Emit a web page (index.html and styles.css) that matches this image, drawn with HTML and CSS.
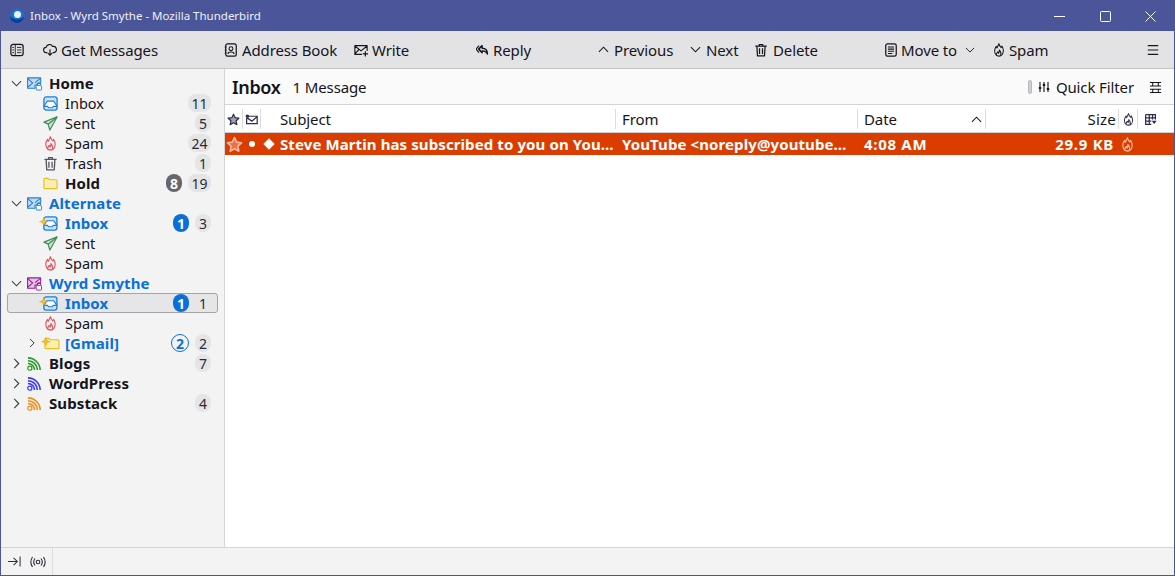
FILE: index.html
```html
<!DOCTYPE html>
<html lang="en">
<head>
<meta charset="utf-8">
<title>Inbox - Wyrd Smythe - Mozilla Thunderbird</title>
<link rel="stylesheet" href="styles.css">
</head>
<body>
<svg class="defs" width="0" height="0" aria-hidden="true">
  <symbol id="flame" viewBox="0 0 16 16"><g transform="translate(1.600 0) scale(.8 1)" fill="none" stroke="currentColor" stroke-width="1.500" stroke-linejoin="round"><path d="M8 .9c.4 2 1.800 3 3 4.300.6-.4 1-1 1.200-1.600 1.300 1.700 2 3.500 2 5.300C14.200 12.500 11.500 15 8 15s-6.200-2.500-6.200-6.200c0-2 1-3.700 2.200-5 .2.800.6 1.400 1.100 1.800C6 3.800 7.200 2.400 8 .9z"/><path d="M4.300 14.300c-.6-1.800.4-3 1.900-4 .6.500 1 .9 1.300 1.500.5-1.300 1-2.500 1-3.700 1.500 1.500 3.300 3.800 2 6.200"/></g></symbol>
  <symbol id="sent" viewBox="0 0 16 16"><path fill="currentColor" fill-opacity=".18" stroke="currentColor" stroke-width="1.300" stroke-linejoin="round" d="M15 1 1 6.500l4.500 2.200 1.800 6.300L15 1z"/><path fill="none" stroke="currentColor" stroke-width="1.300" d="M5.500 8.700 15 1"/></symbol>
  <symbol id="inbox" viewBox="0 0 16 16"><rect x="1" y="1" width="14" height="14" rx="2.500" fill="#cfe3fb" stroke="currentColor" stroke-width="1.400"/><path fill="#fff" stroke="currentColor" stroke-width="1.200" stroke-linejoin="round" d="M1 11 4.500 5.500h7L15 11h-4l-1 1.500H6L5 11z"/></symbol>
  <symbol id="inboxnew" viewBox="0 0 20 16"><rect x="5" y="1" width="14" height="14" rx="2.500" fill="#cfe3fb" stroke="currentColor" stroke-width="1.400"/><path fill="#fff" stroke="currentColor" stroke-width="1.200" stroke-linejoin="round" d="M5 10 8.500 5h7L19 10h-4l-1 1.500h-4L9 10z"/><path fill="#f2c230" stroke="#e0a010" stroke-width=".6" d="M5 1.500 6.300 5 9.500 6 6.300 7 5 10.500 3.700 7 .5 6l3.200-1z"/></symbol>
  <symbol id="trash" viewBox="0 0 16 16"><path fill="none" stroke="currentColor" stroke-width="1.400" stroke-linejoin="round" d="M1.500 3.500h13M6 3.500V1.700h4v1.800M3.300 3.500l.7 11.200h8l.7-11.200M6.300 6v6.500M9.700 6v6.500"/></symbol>
  <symbol id="folder" viewBox="0 0 16 16"><path fill="#fbeeb0" stroke="#e6c020" stroke-width="1.200" stroke-linejoin="round" d="M1 3.500a1 1 0 0 1 1-1h3.500l1.500 1.500h7a1 1 0 0 1 1 1v7.500a1 1 0 0 1-1 1H2a1 1 0 0 1-1-1z"/></symbol>
  <symbol id="foldernew" viewBox="0 0 20 16"><path fill="#fbeeb0" stroke="#e6c020" stroke-width="1.200" stroke-linejoin="round" d="M4 3.500a1 1 0 0 1 1-1h3.500L10 4h8a1 1 0 0 1 1 1v7.500a1 1 0 0 1-1 1H5a1 1 0 0 1-1-1z"/><path fill="#f2c230" stroke="#e0a010" stroke-width=".6" d="M5 1.500 6.300 5 9.500 6 6.300 7 5 10.500 3.700 7 .5 6l3.200-1z"/></symbol>
  <symbol id="acct" viewBox="0 0 16 16"><path fill="currentColor" fill-opacity=".2" stroke="currentColor" stroke-width="1.100" stroke-linejoin="round" d="M.6 2h14v6H11v1.500H8.500V13H.6z"/><path fill="none" stroke="currentColor" stroke-width="1.100" d="M.6 2.500 6 7.500.6 12M14.500 2.500 8.500 7"/><rect x="9.800" y="10" width="5.700" height="5" rx="1" fill="#fff" stroke="currentColor"/><path fill="none" stroke="currentColor" d="M11 10V8.800a1.700 1.700 0 0 1 3.400 0V10"/></symbol>
  <symbol id="rss" viewBox="0 0 16 16"><circle cx="3" cy="13" r="2.200" fill="none" stroke="currentColor" stroke-width="1.300"/><path fill="none" stroke="currentColor" stroke-width="1.700" d="M1 8a7 7 0 0 1 7 7M1 5a10 10 0 0 1 10 10M1 2a13 13 0 0 1 13 13"/></symbol>
  <symbol id="chev-d" viewBox="0 0 12 12"><path fill="none" stroke="currentColor" stroke-width="1.100" d="M1 3.500 6 8.500l5-5"/></symbol>
  <symbol id="chev-u" viewBox="0 0 12 12"><path fill="none" stroke="currentColor" stroke-width="1.100" d="M1 8.500 6 3.500l5 5"/></symbol>
  <symbol id="chev-r" viewBox="0 0 12 12"><path fill="none" stroke="currentColor" stroke-width="1.200" d="M3.500 1 8.500 6l-5 5"/></symbol>
  <symbol id="filter" viewBox="0 0 12 12"><path fill="none" stroke="currentColor" stroke-width="1.100" d="M2 1v10M6 1v10M10 1v10"/><path fill="currentColor" d="M.8 6h2.400v2H.8zM4.800 3h2.400v2H4.800zM8.800 7h2.400v2H8.800z"/></symbol>
  <symbol id="star" viewBox="0 0 16 16"><path fill="currentColor" fill-opacity=".45" stroke="currentColor" stroke-width="1.500" stroke-linejoin="round" d="m8 1.500 2 4.300 4.600.6-3.400 3.200.9 4.700L8 12l-4.100 2.300.9-4.700L1.400 6.400 6 5.800z"/></symbol>
</svg>
<div class="window">
  <header class="titlebar">
    <svg class="applogo" viewBox="0 0 16 16" width="16" height="16"><circle cx="8" cy="8" r="7" fill="#1673d6"/><path fill="#0a3f94" d="M1 8a7 7 0 0 0 14 0c-2 4-10 5-14 0z"/><circle cx="8.500" cy="6.500" r="3.500" fill="#e8f3fc"/></svg>
    <span class="wintitle">Inbox - Wyrd Smythe - Mozilla Thunderbird</span>
    <div class="winctl">
      <svg viewBox="0 0 11 11"><path stroke="#fff" d="M0 5.500h11"/></svg>
      <svg viewBox="0 0 11 11"><rect x=".5" y=".5" width="10" height="10" rx="1" fill="none" stroke="#fff"/></svg>
      <svg viewBox="0 0 11 11"><path stroke="#fff" d="m.5.500 10 10M10.500.500l-10 10"/></svg>
    </div>
  </header>

  <nav class="toolbar">
    <span class="tb"><svg class="ti" viewBox="0 0 16 16"><rect x="1" y="1.500" width="14" height="13" rx="2.500" fill="none" stroke="currentColor" stroke-width="1.400"/><path fill="none" stroke="currentColor" d="M6 1.500v13M8 5h5M8 8h5M8 11h5M2.500 5h2M2.500 8h2M2.500 11h2"/></svg></span>
    <span class="tb"><svg class="ti" viewBox="0 0 16 16"><path fill="none" stroke="currentColor" stroke-width="1.300" stroke-linejoin="round" d="M5 11H4a3 3 0 0 1-.5-6A4 4 0 0 1 11 4a3.500 3.500 0 0 1 1.500 7H11"/><path fill="none" stroke="currentColor" stroke-width="1.300" d="M8 7v7M5.500 11.500 8 14l2.500-2.500"/></svg>Get Messages</span>
    <span class="tb"><svg class="ti" viewBox="0 0 16 16"><rect x="2" y="1" width="12" height="14" rx="2" fill="none" stroke="currentColor" stroke-width="1.400"/><circle cx="8" cy="6.500" r="2.200" fill="none" stroke="currentColor" stroke-width="1.200"/><path fill="none" stroke="currentColor" stroke-width="1.200" d="M4.500 12.500c.3-3 6.700-3 7 0M.8 4.500h2M.8 8h2M.8 11.500h2"/></svg>Address Book</span>
    <span class="tb"><svg class="ti" viewBox="0 0 16 16"><path fill="none" stroke="currentColor" stroke-width="1.300" stroke-linejoin="round" d="M9 13H1V3h14v6M1 3.500 8 9l7-5.500M1 12.500l4.500-5"/><path fill="none" stroke="currentColor" stroke-width="1.300" d="M13 9.500v6M10 12.500h6"/></svg>Write</span>
    <span class="tb"><svg class="ti reply" viewBox="0 0 16 16"><path fill="none" stroke="currentColor" stroke-width="1.700" stroke-linejoin="round" d="M7 3 3 7l4 4V9c3 0 5 1 6 3.500.3-4-2-6.500-6-6.500z"/><path fill="none" stroke="currentColor" stroke-width="1.300" d="M3.500 3 0 7l3.500 4"/></svg>Reply</span>
    <span class="tb"><svg class="ti nav"><use href="#chev-u"/></svg>Previous</span>
    <span class="tb"><svg class="ti nav"><use href="#chev-d"/></svg>Next</span>
    <span class="tb"><svg class="ti del"><use href="#trash"/></svg>Delete</span>
    <span class="tb"><svg class="ti mv" viewBox="0 0 16 16"><rect x="2" y="1" width="12" height="14" rx="2" fill="none" stroke="currentColor" stroke-width="1.400"/><path fill="none" stroke="currentColor" stroke-width="1.200" d="M4.500 4.500h7M4.500 7h7M4.500 9.500h7M4.500 12h5"/></svg>Move to<svg class="tchev"><use href="#chev-d"/></svg></span>
    <span class="tb"><svg class="ti sp"><use href="#flame"/></svg>Spam</span>
    <span class="tb"><svg class="ti" viewBox="0 0 16 16"><path stroke="currentColor" stroke-width="1.200" d="M2 3h12M2 8h12M2 13h12"/></svg></span>
  </nav>

  <div class="main">
    <aside class="sidebar">
      <div class="row l0 strong"><svg class="tw"><use href="#chev-d"/></svg><svg class="ic c-blue"><use href="#acct"/></svg><span class="nm">Home</span></div>
      <div class="row l1"><svg class="ic c-blue"><use href="#inbox"/></svg><span class="nm">Inbox</span><span class="pill">11</span></div>
      <div class="row l1"><svg class="ic c-green"><use href="#sent"/></svg><span class="nm">Sent</span><span class="pill">5</span></div>
      <div class="row l1"><svg class="ic c-red"><use href="#flame"/></svg><span class="nm">Spam</span><span class="pill">24</span></div>
      <div class="row l1"><svg class="ic c-grey"><use href="#trash"/></svg><span class="nm">Trash</span><span class="pill">1</span></div>
      <div class="row l1 strong"><svg class="ic"><use href="#folder"/></svg><span class="nm">Hold</span><span class="badge grey">8</span><span class="pill">19</span></div>
      <div class="row l0 strong new"><svg class="tw"><use href="#chev-d"/></svg><svg class="ic c-blue"><use href="#acct"/></svg><span class="nm">Alternate</span></div>
      <div class="row l1n strong new"><svg class="icn c-blue"><use href="#inboxnew"/></svg><span class="nm">Inbox</span><span class="badge">1</span><span class="pill">3</span></div>
      <div class="row l1"><svg class="ic c-green"><use href="#sent"/></svg><span class="nm">Sent</span></div>
      <div class="row l1"><svg class="ic c-red"><use href="#flame"/></svg><span class="nm">Spam</span></div>
      <div class="row l0 strong new"><svg class="tw"><use href="#chev-d"/></svg><svg class="ic c-purple"><use href="#acct"/></svg><span class="nm">Wyrd Smythe</span></div>
      <div class="row l1n strong new sel"><svg class="icn c-blue"><use href="#inboxnew"/></svg><span class="nm">Inbox</span><span class="badge">1</span><span class="pill plain">1</span></div>
      <div class="row l1"><svg class="ic c-red"><use href="#flame"/></svg><span class="nm">Spam</span></div>
      <div class="row l1t strong new"><svg class="tw"><use href="#chev-r"/></svg><svg class="icn"><use href="#foldernew"/></svg><span class="nm">[Gmail]</span><span class="badge ring">2</span><span class="pill">2</span></div>
      <div class="row l0 strong"><svg class="tw"><use href="#chev-r"/></svg><svg class="ic c-rgreen"><use href="#rss"/></svg><span class="nm">Blogs</span><span class="pill">7</span></div>
      <div class="row l0 strong"><svg class="tw"><use href="#chev-r"/></svg><svg class="ic c-rblue"><use href="#rss"/></svg><span class="nm">WordPress</span></div>
      <div class="row l0 strong"><svg class="tw"><use href="#chev-r"/></svg><svg class="ic c-orange"><use href="#rss"/></svg><span class="nm">Substack</span><span class="pill">4</span></div>
    </aside>

    <section class="content">
      <div class="listhead">
        <h1 class="h-title">Inbox</h1>
        <span class="h-count">1 Message</span>
        <span class="qf-toggle"></span>
        <svg class="qf-ic"><use href="#filter"/></svg>
        <span class="qf-text">Quick Filter</span>
        <svg class="qf-opt" viewBox="0 0 14 14"><path fill="none" stroke="currentColor" d="M1 1.500h12M1 5.500h12M1 9h12M1 12.500h12M4 1.500v4M10 1.500v4M4 9v3.500M10 9v3.500" stroke-width="1.100"/></svg>
      </div>
      <div class="cols colhead">
        <span class="c"><svg class="hi"><use href="#star"/></svg></span>
        <span class="c"><svg class="hi" viewBox="0 0 16 16"><path fill="none" stroke="currentColor" stroke-width="1.500" d="M3 4h12v9H2V6M2.500 6 8.500 10 15 4.500"/><circle cx="3" cy="4" r="2.200" fill="currentColor"/></svg></span>
        <span class="c txt">Subject</span>
        <span class="c txt">From</span>
        <span class="c txt">Date<svg class="sort"><use href="#chev-u"/></svg></span>
        <span class="c txt right">Size</span>
        <span class="c"><svg class="hi"><use href="#flame"/></svg></span>
        <span class="c last"><svg class="hi" viewBox="0 0 16 16"><path fill="none" stroke="currentColor" stroke-width="1.500" d="M2 2h12v6M2 2v12h7M2 6h12M6.500 2v12M10.500 2v6M2 10h7"/><path fill="currentColor" d="m9.500 9.500h6l-3 4z"/></svg></span>
      </div>
      <div class="cols msg">
        <span class="m"><svg class="mstar"><use href="#star"/></svg></span>
        <span class="m"><i class="dot"></i></span>
        <span class="m subj"><i class="diamond"></i><span class="ell">Steve Martin has subscribed to you on YouTube!</span></span>
        <span class="m tx"><span class="ell">YouTube &lt;noreply@youtube.com&gt;</span></span>
        <span class="m tx wide">4:08 AM</span>
        <span class="m tx right wide">29.9 KB</span>
        <span class="m"><svg class="mflame"><use href="#flame"/></svg></span>
        <span class="m"></span>
      </div>
    </section>
  </div>

  <footer class="status">
    <span class="st"><svg class="st1" viewBox="0 0 14 14"><path fill="none" stroke="currentColor" stroke-width="1.100" d="M0 7h10M6 3l4 4-4 4M13 1.500v11"/></svg><svg class="st2" viewBox="0 0 16 14"><circle cx="8" cy="7" r="1.800" fill="none" stroke="currentColor" stroke-width="1.100"/><path fill="none" stroke="currentColor" stroke-width="1.100" d="M5 3.500C3.500 5.500 3.500 8.500 5 10.500M11 3.500c1.500 2 1.500 5 0 7M2.500 2c-2 3-2 7 0 10M13.500 2c2 3 2 7 0 10"/></svg></span>
  </footer>
</div>
</body>
</html>
```
FILE: styles.css
```css
* { box-sizing: border-box; }
html, body { margin: 0; padding: 0; height: 100%; }
body { font-family: "Noto Sans", "Open Sans", sans-serif; font-size: 15px; color: #15141a; overflow: hidden; }
.defs { position: absolute; }
svg { display: block; flex: none; }

.window { width: 1175px; height: 576px; border: 1px solid #4a5699; border-top: 0; display: flex; flex-direction: column; background: #fff; }

.titlebar { height: 31px; margin: 0 -1px; background: #4a5699; color: #eef0f8; display: flex; align-items: center; padding-left: 9px; flex: none; }
.applogo { margin-right: 5px; }
.wintitle { font-size: 11.5px; }
.winctl { margin-left: auto; display: flex; gap: 34.500px; padding-right: 19px; padding-top: 1px; }
.winctl svg { width: 11px; height: 11px; }

.toolbar { height: 38px; background: #e3e3e6; border-bottom: 1px solid #c4c4c7; flex: none; display: grid; grid-template-columns: 33px 181px 130px 122px 122px 92px 65px 129px 109px 153px 1fr; padding-left: 9px; align-items: center; }
.tb { display: flex; align-items: center; white-space: nowrap; letter-spacing: -.12px; }
.ti { width: 14px; height: 14px; margin-right: 4px; }
.reply { margin-right: 3px; }
.nav { width: 11px; height: 11px; margin-right: 5px; }
.del { margin-right: 5px; margin-left: -1px; }
.mv { margin-right: 3px; }
.sp { margin-right: 3px; margin-left: -1px; }
.tchev { width: 10px; height: 10px; margin-left: 8px; }

.main { flex: 1; display: flex; min-height: 0; }
.sidebar { width: 224px; flex: none; background: #f3f3f4; border-right: 1px solid #d4d4d6; padding: 4px 6px 0; }
.row { height: 20px; display: flex; align-items: center; padding-right: 6px; border-radius: 3px; border: 1px solid transparent; white-space: nowrap; font-size: 14.5px; }
.l0 { padding-left: 3px; }
.l1 { padding-left: 35px; }
.l1n { padding-left: 31px; }
.l1t { padding-left: 19px; }
.strong { font-weight: 700; font-size: 15px; letter-spacing: .1px; }
.new { color: #0b6fd8; }
.sel { background: #e6e6e8; border-color: #a4a4a8; }
.tw { width: 11px; height: 11px; margin-right: 5px; color: #3a3a40; }
.ic { width: 15px; height: 15px; margin-right: 7px; }
.icn { width: 19px; height: 15px; margin-right: 7px; }
.l1t .tw { margin-right: 4px; width: 10px; height: 10px; }
.l1t .icn { margin-right: 5px; }
.nm { margin-right: auto; }
.c-blue { color: #1a7fe0; }
.c-green { color: #3f8f55; }
.c-red { color: #e0555f; }
.c-grey { color: #55555f; }
.c-purple { color: #98199a; }
.c-rgreen { color: #2c9a2c; }
.c-rblue { color: #3a3af0; }
.c-orange { color: #f58a1f; }

.pill, .badge { height: 18px; min-width: 16px; border-radius: 8px; font-size: 14px; font-weight: 400; letter-spacing: 0; display: flex; align-items: center; justify-content: center; padding: 0 3.500px; color: #2b2b33; }
.pill { background: #e5e5e8; }
.pill.plain { background: transparent; }
.badge { background: #0b6fd8; color: #fff; font-weight: 700; margin-right: 6px; padding: 0; }
.badge.grey { background: #66666c; }
.badge.ring { background: transparent; color: #0b6fd8; border: 1.500px solid #0b6fd8; border-radius: 9px; width: 18px; margin-right: 6px; }

.content { flex: 1; min-width: 0; display: flex; flex-direction: column; background: #fff; }
.listhead { height: 36px; background: #fafafa; border-bottom: 1px solid #d4d4d6; display: flex; align-items: center; padding: 1px 12px 0 7px; flex: none; }
.h-title { font-size: 18px; font-weight: 600; margin: 0 12px 0 0; letter-spacing: -.35px; }
.h-count { letter-spacing: -.12px; margin-right: auto; }
.qf-toggle { width: 4px; height: 14px; background: #d0d0d4; border: 1px solid #b8b8bc; border-radius: 2px; margin-right: 6px; }
.qf-ic { width: 12px; height: 12px; margin-right: 6px; }
.qf-text { letter-spacing: -.12px; margin-right: 15px; }
.qf-opt { width: 13px; height: 13px; }

.cols { display: grid; grid-template-columns: 18px 18px 355px 242px 128px 133px 19px 1fr; flex: none; }
.colhead { height: 28px; background: #fff; border-bottom: 1px solid #cfcfd2; }
.c { display: flex; align-items: center; justify-content: center; border-right: 1px solid #dcdcde; margin: 4px 0 4px; }
.c.last { border-right: 0; padding-right: 12px; }
.c.txt { justify-content: flex-start; padding-left: 6px; letter-spacing: -.12px; }
.colhead .c:nth-child(3) { padding-left: 19px; }
.c.txt.right { justify-content: flex-end; padding: 0 2px 0 0; letter-spacing: .2px; }
.hi { width: 13px; height: 13px; color: #2e2e4e; }
.sort { width: 11px; height: 11px; margin-left: auto; margin-right: 3px; }

.msg { height: 22px; background: #db3d00; color: #fff; font-weight: 700; letter-spacing: .1px; align-items: center; }
.m { display: flex; align-items: center; min-width: 0; }
.mstar { width: 17px; height: 17px; margin-left: 1px; color: #f7b9a0; }
.dot { width: 6px; height: 6px; border-radius: 50%; background: #fff; margin-left: 6px; }
.diamond { width: 8px; height: 8px; background: #fff; transform: rotate(45deg); margin: 0 7px 0 4px; flex: none; }
.tx { padding-left: 6px; }
.wide { letter-spacing: .7px; }
.subj .ell { padding-right: 1px; }
.tx .ell { padding-right: 10px; }
.tx.right { justify-content: flex-end; padding: 0 5px 0 0; }
.ell { overflow: hidden; text-overflow: ellipsis; white-space: nowrap; min-width: 0; }
.mflame { width: 15px; height: 15px; margin-left: 1px; color: #f7b9a0; }

.status { height: 28px; background: #f3f3f4; border-top: 1px solid #d4d4d6; flex: none; display: flex; }
.st { width: 52px; border-right: 1px solid #dcdcde; display: flex; align-items: center; padding-left: 7px; color: #2e2e3a; }
.st1 { width: 13px; height: 13px; margin-right: 9px; }
.st2 { width: 16px; height: 14px; }
```
